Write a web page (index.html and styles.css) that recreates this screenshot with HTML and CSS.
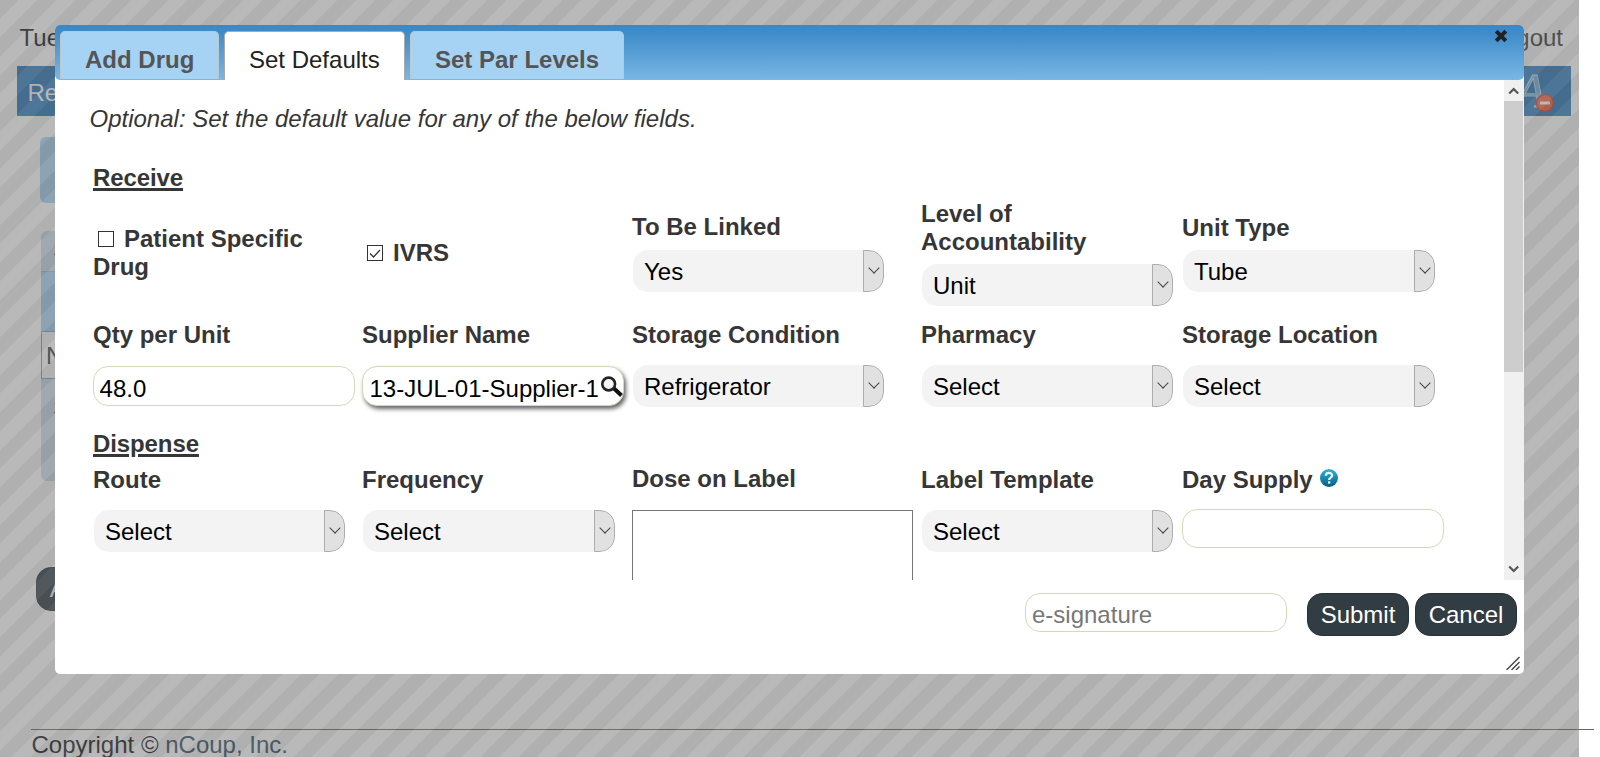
FILE: index.html
```html
<!DOCTYPE html>
<html lang="en">
<head>
<meta charset="utf-8">
<title>Set Defaults</title>
<link rel="stylesheet" href="styles.css">
</head>
<body>
<div class="page">
  <header class="topbar"><span>Tuesday</span><span class="logout">Logout</span></header>
  <nav class="nav">
    <span>Receive</span>
    <svg class="font-icon" width="60" height="50" viewBox="0 0 60 50">
      <text x="5" y="41" class="font-letter">A</text>
      <circle cx="34" cy="37" r="8.5" fill="#f5603f" stroke="#d23a2c" stroke-width="1.5"/>
      <rect x="29" y="35.5" width="10" height="3" fill="#fff"/>
    </svg>
  </nav>
  <div class="panel"></div>
  <div class="grid-table">
    <div class="grid-top">S</div>
    <div class="grid-head"></div>
    <div class="grid-row">Name</div>
    <div class="grid-foot">S</div>
  </div>
  <div class="dark-btn page-add">Add</div>
  <footer class="footer">Copyright © <a>nCoup, Inc.</a></footer>
</div>
<div class="overlay"></div>

<div class="dialog">
  <div class="titlebar">
    <div class="tab">Add Drug</div>
    <div class="tab active">Set Defaults</div>
    <div class="tab">Set Par Levels</div>
    <svg class="close" width="14" height="14" viewBox="0 0 14 14"><path d="M2.2 2.2 L11.8 11.8 M11.8 2.2 L2.2 11.8" stroke="#222" stroke-width="4"/></svg>
  </div>
  <div class="body">
    <div class="content">
      <p class="hint">Optional: Set the default value for any of the below fields.</p>
      <h2 class="section">Receive</h2>
      <div class="fields first">
        <label class="cell check"><i class="box"></i>Patient Specific Drug</label>
        <label class="cell check"><i class="box"><svg width="14" height="14" viewBox="0 0 14 14"><path d="M2 7.5 L5.5 11 L12 4" fill="none" stroke="#333" stroke-width="1.3"/></svg></i>IVRS</label>
        <div class="cell"><label class="up">To Be Linked</label><div class="select"><span>Yes</span><b class="arrow"></b></div></div>
        <div class="cell"><label>Level of<br>Accountability</label><div class="select"><span>Unit</span><b class="arrow"></b></div></div>
        <div class="cell"><label>Unit Type</label><div class="select wide"><span>Tube</span><b class="arrow"></b></div></div>
      </div>
      <div class="fields second">
        <div class="cell"><label>Qty per Unit</label><input class="input" value="48.0"></div>
        <div class="cell"><label>Supplier Name</label>
          <div class="lookup"><input class="input shadow" value="13-JUL-01-Supplier-1">
            <svg class="lens" width="24" height="24" viewBox="0 0 24 24"><path d="M13.5 12 L21.5 19.5" stroke="#111" stroke-width="4"/><circle cx="8.7" cy="8" r="6.4" fill="#f4f4f4" stroke="#222" stroke-width="2.6"/></svg>
          </div>
        </div>
        <div class="cell"><label>Storage Condition</label><div class="select"><span>Refrigerator</span><b class="arrow"></b></div></div>
        <div class="cell"><label>Pharmacy</label><div class="select"><span>Select</span><b class="arrow"></b></div></div>
        <div class="cell"><label>Storage Location</label><div class="select wide"><span>Select</span><b class="arrow"></b></div></div>
      </div>
      <h2 class="section dispense">Dispense</h2>
      <div class="fields third">
        <div class="cell"><label>Route</label><div class="select"><span>Select</span><b class="arrow"></b></div></div>
        <div class="cell"><label>Frequency</label><div class="select wide"><span>Select</span><b class="arrow"></b></div></div>
        <div class="cell"><label class="up">Dose on Label</label><div class="textarea"></div></div>
        <div class="cell"><label>Label Template</label><div class="select"><span>Select</span><b class="arrow"></b></div></div>
        <div class="cell"><label>Day Supply <svg class="help" width="18" height="18" viewBox="0 0 18 18"><defs><linearGradient id="hg" x1="0" y1="0" x2="0" y2="1"><stop offset="0" stop-color="#27b4dc"/><stop offset="1" stop-color="#0c5c80"/></linearGradient></defs><circle cx="9" cy="9" r="9" fill="url(#hg)"/><path d="M5.8 6.8 C5.8 2.8 12.2 2.9 12.2 6.6 C12.2 8.8 9.1 8.6 9.1 11" fill="none" stroke="#e8f8ff" stroke-width="2.2"/><rect x="8" y="12.3" width="2.3" height="2.3" fill="#e8f8ff"/></svg></label><input class="input short"></div>
      </div>
    </div>
    <div class="scrollbar">
      <svg class="sb-btn" width="20" height="21" viewBox="0 0 20 21"><path d="M5.2 13.5 L9.7 9 L14.2 13.5" fill="none" stroke="#555" stroke-width="2.2"/></svg>
      <div class="thumb"></div>
      <svg class="sb-btn end" width="20" height="21" viewBox="0 0 20 21"><path d="M5.2 7.5 L9.7 12 L14.2 7.5" fill="none" stroke="#555" stroke-width="2.2"/></svg>
    </div>
  </div>
  <div class="actions">
    <input class="input short sign" placeholder="e-signature">
    <div class="dark-btn">Submit</div>
    <div class="dark-btn">Cancel</div>
  </div>
  <svg class="grip" width="14" height="14" viewBox="0 0 14 14"><path d="M0.5 14 L13.5 1 M5.5 14 L13.5 6 M10 14 L13.5 10.5" stroke="#444" stroke-width="1.4"/></svg>
</div>
</body>
</html>
```
FILE: styles.css
```css
* { box-sizing: border-box; }
body { margin: 0; width: 1600px; height: 757px; overflow: hidden; background: #fff; position: relative; font: 24px/28px "Liberation Sans", Arial, sans-serif; color: #363636; }

/* page under the dialog */
.page { height: 757px; display: flex; flex-direction: column; overflow: hidden; }
.topbar { height: 66px; padding: 24px 37px 0 19.6px; display: flex; justify-content: space-between; color: #111; flex: none; }
.logout { color: #333; }
.nav { height: 50px; width: 1554px; margin-left: 17px; background: #2878bd; color: #fff; padding-left: 10.5px; display: flex; align-items: center; justify-content: space-between; flex: none; }
.nav span { padding-top: 4px; }
.font-letter { font: italic 49px "Liberation Serif", serif; fill: #78b4dc; stroke: #b9daee; stroke-width: 1px; }
.panel { margin: 21px 0 0 40px; width: 1400px; height: 66px; border-radius: 6px; background: #a6d3f4; flex: none; }
.grid-table { margin: 28px 0 0 41px; width: 1400px; height: 250px; border-radius: 6px; background: #ccdfec; display: flex; flex-direction: column; overflow: hidden; flex: none; }
.grid-top { height: 40px; padding: 5px 0 0 12px; }
.grid-head { height: 60px; background: #a6d3f4; border-top: 1px solid #8fbfe0; }
.grid-row { height: 48px; background: #fff; border: 1px solid #6eaac8; padding: 10px 0 0 4px; }
.grid-foot { padding: 15px 0 0 12px; }
.dark-btn { height: 43px; width: 102px; border-radius: 15px; background: #313c43; border: 1px solid #26333a; color: #fff; text-align: center; line-height: 42px; }
.page-add { margin: 86px 0 0 36px; height: 44px; width: 70px; flex: none; }
.footer { margin: 118px 6px 0 31px; border-top: 1px solid #6b6b5a; padding: 1px 0 0 .5px; color: #111; flex: none; }
.footer a { color: #2c4a60; }
.overlay { position: absolute; left: 0; top: 0; width: 1579px; height: 757px; opacity: .5; background: repeating-linear-gradient(135deg, #616161 0 13.26px, #737373 13.26px 26.52px); }

/* dialog */
.dialog { position: absolute; left: 55px; top: 25px; width: 1469px; height: 649px; background: #fff; border-radius: 5px; display: flex; flex-direction: column; }
.titlebar { height: 55px; flex: none; border-radius: 5px; background: linear-gradient(#3b88c5, #3f8cca 15%, #79b7e4); padding: 6px 0 0 5px; display: flex; gap: 5px; position: relative; }
.tab { height: 48px; border: 1px solid #c5c5c5; border-bottom: 0; border-radius: 5px 5px 0 0; background: #a6d3f4; color: #555; font-weight: bold; padding: 14px 24px 0; white-space: nowrap; }
.tab:first-child { width: 159px; }
.tab:nth-child(3) { width: 214px; }
.tab.active { width: 181px; height: 49px; padding-left: 24px; background: #fff; color: #222; font-weight: normal; border-color: #aaa; }
.close { position: absolute; right: 16px; top: 4px; }
.body { height: 500px; display: flex; overflow: hidden; flex: none; }
.content { flex: 1; padding-left: 38px; overflow: hidden; }
.hint { margin: 25px 0 0 -3.5px; font-style: italic; }
.section { margin: 31px 0 0; font-size: 24px; line-height: 28px; text-decoration: underline; text-decoration-thickness: 3px; letter-spacing: -.1px; }
.section.dispense { margin-top: 23px; }
.fields { display: grid; grid-template-columns: 269px 270px 289px 261px 262px; }
.first { margin-top: 8px; height: 106px; align-items: center; }
.second { margin-top: 15px; }
.third { margin-top: 8px; }
.cell { position: relative; }
.cell > label, .check { display: block; font-weight: bold; white-space: nowrap; }
.cell > .up { margin-top: -1px; padding-bottom: 1px; }
.check { white-space: normal; padding-right: 30px; }
.box { display: inline-block; width: 16px; height: 16px; border: 1px solid #333; margin: 0 10px 0 5px; vertical-align: 0; }
.box svg { display: block; }
.select { height: 42px; width: 251px; margin-left: 1px; background: #f3f3f3; border-radius: 15px; overflow: hidden; display: flex; justify-content: space-between; align-items: stretch; color: #000; line-height: 44px; padding-left: 11px; }
.select.wide { width: 252px; }
.first .select { margin-top: 8px; }
.second .select, .third .select { margin-top: 16px; }
.arrow { width: 21px; background: #e1e1e1; border: 1px solid #adadad; border-radius: 0 15px 15px 0; display: flex; align-items: center; justify-content: center; }
.arrow::before { content: ""; width: 7px; height: 7px; border: solid #444; border-width: 0 1px 1px 0; transform: translateY(-3px) rotate(45deg); }
.input { display: block; width: 262px; height: 40px; border: 1px solid #d6d8b5; border-radius: 15px; background: #fff; margin: 17px 0 0; padding: 5px 5px 0 5.6px; font: inherit; color: #000; outline: 0; }
.input.short { height: 39px; margin-top: 15px; }
.input::placeholder { color: #777; opacity: 1; }
.input.sign { padding-left: 6px; }
.input.shadow { box-shadow: 2px 3px 4px #666; padding-left: 6.5px; }
.lookup { position: relative; width: 262px; }
.lens { position: absolute; right: 0; top: 10px; }
.textarea { width: 281px; height: 120px; border: 1px solid #767676; margin-top: 16px; }
.help { vertical-align: 1px; margin-left: 1px; }
.scrollbar { width: 20px; background: #f0f0f0; display: flex; flex-direction: column; }
.sb-btn { flex: none; }
.thumb { width: 19px; height: 271px; background: #cdcdcd; }
.end { margin-top: auto; }
.actions { display: flex; justify-content: flex-end; padding: 13px 7px 0 0; gap: 6px; }
.actions .sign { margin: 0 14px 0 0; }
.grip { position: absolute; right: 4px; bottom: 4px; }
```
